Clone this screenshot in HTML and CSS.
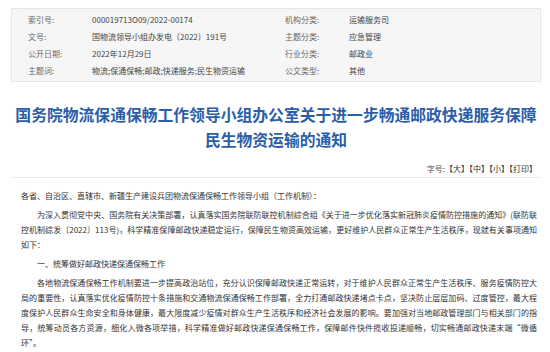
FILE: index.html
```html
<!DOCTYPE html>
<html lang="zh-CN">
<head>
    <meta charset="UTF-8">
    <meta name="viewport" content="width=device-width, initial-scale=1.0">
    <title>国务院物流保通保畅工作领导小组办公室关于进一步畅通邮政快递服务保障民生物资运输的通知</title>
    <link rel="stylesheet" href="styles.css">
</head>
<body>
    <div class="page">
        <div class="meta-box">
            <span class="label">索引号:</span><span class="value">000019713O09/2022-00174</span>
            <span class="label">机构分类:</span><span class="value">运输服务司</span>
            <span class="label">文号:</span><span class="value">国物流领导小组办发电〔2022〕191号</span>
            <span class="label">主题分类:</span><span class="value">应急管理</span>
            <span class="label">公开日期:</span><span class="value">2022年12月29日</span>
            <span class="label">行业分类:</span><span class="value">邮政业</span>
            <span class="label">主题词:</span><span class="value">物流;保通保畅;邮政;快递服务;民生物资运输</span>
            <span class="label">公文类型:</span><span class="value">其他</span>
        </div>

        <h1 class="title">国务院物流保通保畅工作领导小组办公室关于进一步畅通邮政快递服务保障民生物资运输的通知</h1>

        <div class="font-size">
            字号:<a href="#">【大】</a><a href="#">【中】</a><a href="#">【小】</a><a href="#">【打印】</a>
        </div>

        <div class="content">
            <p class="no-indent">各省、自治区、直辖市、新疆生产建设兵团物流保通保畅工作领导小组（工作机制）：</p>
            <p>为深入贯彻党中央、国务院有关决策部署，认真落实国务院联防联控机制综合组《关于进一步优化落实新冠肺炎疫情防控措施的通知》(联防联控机制综发〔2022〕113号)，科学精准保障邮政快递稳定运行，保障民生物资高效运输，更好维护人民群众正常生产生活秩序，现就有关事项通知如下：</p>
            <p>一、统筹做好邮政快递保通保畅工作</p>
            <p>各地物流保通保畅工作机制要进一步提高政治站位，充分认识保障邮政快递正常运转，对于维护人民群众正常生产生活秩序、服务疫情防控大局的重要性，认真落实优化疫情防控十条措施和交通物流保通保畅工作部署，全力打通邮政快递堵点卡点，坚决防止层层加码、过度管控，最大程度保护人民群众生命安全和身体健康，最大限度减少疫情对群众生产生活秩序和经济社会发展的影响。要加强对当地邮政管理部门与相关部门的指导，统筹动员各方资源，细化入微各项举措，科学精准做好邮政快递保通保畅工作，保障邮件快件揽收投递顺畅，切实畅通邮政快递末端“微循环”。</p>
        </div>
    </div>
</body>
</html>
```

FILE: styles.css
```css
html, body {
    height: 100%;
    overflow: hidden;
}
body {
    margin: 0;
    background-color: #ffffff;
    color: #333333;
    font-family: "Noto Sans CJK SC", "Noto Sans", sans-serif;
    font-size: 8px;
}
.page {
    padding: 8px 9px 0 11px;
}
.meta-box {
    display: grid;
    grid-template-columns: 64px 193px 64px 1fr;
    grid-auto-rows: 17px;
    align-items: center;
    padding: 2px 0 2px 16px;
    background-color: #f6f6f6;
    border: 1px solid #e6e6e6;
}
.meta-box .label {
    color: #666666;
}
.meta-box .value {
    color: #444444;
}
.title {
    margin: 20px 0 0;
    font-size: 15.8px;
    line-height: 25px;
    font-weight: bold;
    color: #2c5ea8;
    text-align: center;
}
.font-size {
    margin-top: 9px;
    line-height: 15px;
    padding: 0 4px 1px 0;
    text-align: right;
    color: #555555;
    border-bottom: 1px solid #e8e8e8;
}
.font-size a {
    color: #333333;
    text-decoration: none;
}
.content {
    padding: 10px 4px 0 10px;
}
.content p {
    margin: 0 0 4px;
    line-height: 15px;
    text-indent: 2em;
    text-align: justify;
}
.content p.no-indent {
    text-indent: 0;
}
```
